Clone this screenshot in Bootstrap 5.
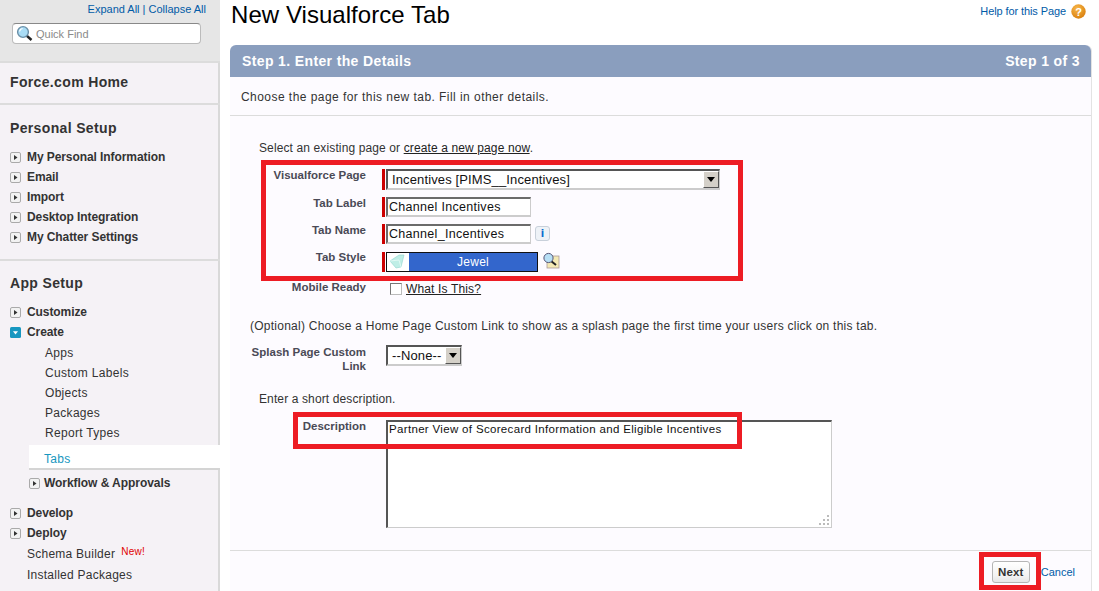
<!DOCTYPE html>
<html lang="en">
<head>
<meta charset="utf-8">
<title>New Visualforce Tab</title>
<link rel="stylesheet" href="https://cdn.jsdelivr.net/npm/bootstrap@5.3.0/dist/css/bootstrap.min.css">
<style>
html,body{height:591px;overflow:hidden;background:#fff;}
body{font-family:"Liberation Sans",Arial,sans-serif;font-size:12px;line-height:14px;color:#222;position:relative;}
a{color:#015ba7;text-decoration:none;}
.sf-page{width:1099px;height:591px;}
.sf-side{width:220px;flex:none;background:#f5f2f6;box-shadow:inset -2px 0 0 #d9d9d9;height:591px;overflow:hidden;}
.sf-search{height:63px;background:#e6e6e6;border-bottom:2px solid #dcdcdc;padding-top:2px;}
.sf-expand{padding-right:14px;text-align:right;font-size:11px;line-height:14px;}
.sf-find{margin:7px 0 0 12px;width:189px;height:21px;background:#fff;border:1px solid #bbb;border-top-color:#888;border-radius:4px;padding-left:3px;color:#8a8a8a;font-size:11px;gap:2px;}
.sf-home{height:42px;border-bottom:2px solid #dcdcdc;padding-left:10px;font-size:14px;font-weight:700;color:#333;letter-spacing:.35px;line-height:39px;}
.sf-sect{height:156px;border-bottom:2px solid #dcdcdc;}
.sf-h{padding-left:10px;font-size:14px;font-weight:700;color:#333;letter-spacing:.35px;line-height:16px;}
.sf-h-a{padding-top:15px;height:42px;}
.sf-h-b{padding-top:14px;height:41px;}
.sf-item{height:20px;padding-left:10px;font-weight:700;color:#333;line-height:20px;gap:6px;letter-spacing:-.08px;}
.sf-item-in{padding-left:29px;gap:4px;letter-spacing:-.05px;}
.sf-item-gap{margin-top:10px;}
.sf-sub{height:20px;padding-left:45px;line-height:20px;color:#333;letter-spacing:.3px;}
.sf-sub-first{margin-top:1px;}
.sf-plain{height:21px;padding-left:27px;line-height:22px;color:#333;letter-spacing:.25px;}
.sf-new{color:#e00000;font-size:10px;line-height:10px;margin-left:6px;vertical-align:3px;}
.sf-cur{height:25px;margin:2px 0 3px 29px;width:191px;background:#fff;border-bottom:2px solid #d4d4d4;padding-left:15px;line-height:29px;color:#1797c0;letter-spacing:.3px;}
.sf-tog{width:11px;height:11px;flex:none;}
.sf-main{width:879px;padding:0 7px 0 10px;flex:none;}
.sf-title{height:45px;}
.sf-title h1{font-size:24px;line-height:30px;margin:0 0 0 1px;font-weight:400;color:#000;letter-spacing:.05px;}
.sf-help{font-size:11px;gap:5px;padding-top:2px;padding-right:6px;height:20px;line-height:16px;letter-spacing:-.1px;}
.sf-panel{background:#fdfbff;border:0;border-right:1px solid #e3e3e3;border-radius:6px 6px 0 0;height:546px;}
.sf-phead{height:32px;background:#8a9ebe;color:#fff;font-weight:700;font-size:14px;letter-spacing:.37px;border:0;border-radius:6px 6px 0 0!important;padding:0 11px 0 12px;line-height:32px;}
.sf-intro{height:39px;line-height:40px;padding-left:11px;border-bottom:1px solid #dcdcdc;letter-spacing:.45px;color:#333;}
.sf-body{padding:25px 0 0 0;height:434px;}
.sf-note{letter-spacing:.12px;color:#333;line-height:14px;padding-left:29px;}
.sf-note-long{letter-spacing:.25px;padding-left:20px;margin-top:23px;}
.sf-note-desc{margin-top:19px;}
.sf-note a{color:#222;text-decoration:underline;}
.sf-label{width:136px;flex:none;text-align:right;font-size:11.5px;font-weight:700;color:#4a4a56;line-height:14px;margin-top:-1px;}
.sf-up{margin-top:-2px;}
.sf-level{margin-top:0;}
.sf-req{width:3px;flex:none;align-self:stretch;background:#c00;margin:0 1px 0 16px;}
.sf-noreq{width:20px;flex:none;}
.sf-noreq-wide{width:24px;}
.sf-input{border-style:solid;border-width:2px 1px 2px 2px;border-color:#6b6b6b #ccc #ccc #6b6b6b;height:20px;width:145px;padding:0 0 0 1px;font:12.5px/14px "Liberation Sans",Arial,sans-serif;letter-spacing:.3px;color:#111;background:#fff;outline:0;border-radius:0;}
.sf-selwrap{border-style:solid;border-width:2px 1px 2px 2px;border-color:#555 #ccc #ccc #555;background:#fff;height:21px;}
.sf-sel-a{width:334px;}
.sf-sel-b{width:76px;}
.sf-sel{appearance:none;border:0;background:transparent;font:13px/15px "Liberation Sans",Arial,sans-serif;letter-spacing:.13px;color:#111;padding:0 0 0 4px;height:17px;flex:1 1 auto;min-width:0;outline:0;}
.sf-arr{width:16px;height:17px;flex:none;background:#d4d0c8;border-style:solid;border-width:1px;border-color:#fff #555 #555 #fff;}
.sf-jewel{width:152px;height:20px;border:1px solid #111;background:#fff;}
.sf-jewel span{flex:1 1 auto;background:#3366cc;color:#fff;text-align:center;line-height:18px;letter-spacing:.3px;font-size:12px;}
.sf-jewel svg{flex:none;margin:0 1px;}
.sf-infob{width:15px;height:15px;border:1px solid #c8d0da;border-radius:3px;background:#eef2f7;color:#0a6cd0;font-weight:700;font-size:10px;line-height:13px;text-align:center;margin:2px 0 0 4px;font-family:"DejaVu Sans",sans-serif;}
.sf-check{width:12px;height:12px;border:1px solid #777;border-right-color:#bbb;border-bottom-color:#bbb;background:#fff;margin:2px 4px 0 0;flex:none;}
.sf-link{color:#222;text-decoration:underline;letter-spacing:.15px;margin-top:1px;}
.sf-area{width:446px;height:108px;border-style:solid;border-width:2px 1px 1px 2px;border-color:#555 #ccc #ccc #555;background:#fff;font:11.5px/14px "Liberation Sans",Arial,sans-serif;letter-spacing:.33px;padding:0 0 0 1px;resize:none;outline:0;color:#111;border-radius:0;display:block;}
.sf-areawrap{position:relative;}
.sf-grip{position:absolute;right:2px;bottom:2px;}
.sf-foot{height:41px;border-top:1px solid #dcdcdc;background:transparent;padding:2px 0 0;}
.sf-next{width:38px;height:22px;padding:0;font-size:11.5px;font-weight:700;color:#333;border:1px solid #b5b5b5;border-radius:3px;background:linear-gradient(#fff,#f2f2f2 70%,#e6e6e6);line-height:18px;letter-spacing:.2px;}
.sf-cancel{font-size:11px;margin:0 16px 0 11px;}
.sf-mt-7{margin-top:7px;}
.sf-mt-8{margin-top:8px;}
.sf-mt-9{margin-top:9px;}
.sf-mt-12{margin-top:12px;}
.sf-mt-14{margin-top:14px;}
.sf-mark{position:absolute;border:5px solid #ed1c24;pointer-events:none;}
.sf-mark-a{left:261px;top:160px;width:482px;height:121px;}
.sf-mark-b{left:293px;top:412px;width:449px;height:37px;}
.sf-mark-c{left:979px;top:552px;width:62px;height:38px;}
</style>
</head>
<body>
<div class="sf-page d-flex">
  <aside class="sf-side">
    <div class="sf-search">
      <div class="sf-expand"><a href="#">Expand All</a> <a href="#">| Collapse All</a></div>
      <div class="sf-find d-flex align-items-center">
        <svg width="18" height="17" viewBox="0 0 18 17"><line x1="10.5" y1="10.5" x2="15.5" y2="15" stroke="#222" stroke-width="2.4"/><circle cx="7" cy="7" r="5.4" fill="#a9dcf5" stroke="#6c90a8" stroke-width="1.4"/><path d="M3.6 6.5a3.5 3.5 0 0 1 3-3" fill="none" stroke="#fff" stroke-width="1.2"/></svg>
        <span>Quick Find</span>
      </div>
    </div>
    <div class="sf-home">Force.com Home</div>
    <div class="sf-sect">
      <div class="sf-h sf-h-a">Personal Setup</div>
      <div class="sf-item d-flex align-items-center"><svg class="sf-tog" viewBox="0 0 11 11"><rect x=".5" y=".5" width="10" height="10" rx="1.5" fill="#f2f2f2" stroke="#aaa"/><path d="M4 3l3.5 2.5L4 8z" fill="#333"/></svg><span>My Personal Information</span></div>
      <div class="sf-item d-flex align-items-center"><svg class="sf-tog" viewBox="0 0 11 11"><rect x=".5" y=".5" width="10" height="10" rx="1.5" fill="#f2f2f2" stroke="#aaa"/><path d="M4 3l3.5 2.5L4 8z" fill="#333"/></svg><span>Email</span></div>
      <div class="sf-item d-flex align-items-center"><svg class="sf-tog" viewBox="0 0 11 11"><rect x=".5" y=".5" width="10" height="10" rx="1.5" fill="#f2f2f2" stroke="#aaa"/><path d="M4 3l3.5 2.5L4 8z" fill="#333"/></svg><span>Import</span></div>
      <div class="sf-item d-flex align-items-center"><svg class="sf-tog" viewBox="0 0 11 11"><rect x=".5" y=".5" width="10" height="10" rx="1.5" fill="#f2f2f2" stroke="#aaa"/><path d="M4 3l3.5 2.5L4 8z" fill="#333"/></svg><span>Desktop Integration</span></div>
      <div class="sf-item d-flex align-items-center"><svg class="sf-tog" viewBox="0 0 11 11"><rect x=".5" y=".5" width="10" height="10" rx="1.5" fill="#f2f2f2" stroke="#aaa"/><path d="M4 3l3.5 2.5L4 8z" fill="#333"/></svg><span>My Chatter Settings</span></div>
    </div>
    <div class="sf-h sf-h-b">App Setup</div>
    <div class="sf-item d-flex align-items-center"><svg class="sf-tog" viewBox="0 0 11 11"><rect x=".5" y=".5" width="10" height="10" rx="1.5" fill="#f2f2f2" stroke="#aaa"/><path d="M4 3l3.5 2.5L4 8z" fill="#333"/></svg><span>Customize</span></div>
    <div class="sf-item d-flex align-items-center"><svg class="sf-tog" viewBox="0 0 11 11"><rect width="11" height="11" rx="1.5" fill="#1797c0"/><path d="M3 4.2h5L5.5 7.5z" fill="#fff"/></svg><span>Create</span></div>
    <div class="sf-sub sf-sub-first">Apps</div>
    <div class="sf-sub">Custom Labels</div>
    <div class="sf-sub">Objects</div>
    <div class="sf-sub">Packages</div>
    <div class="sf-sub">Report Types</div>
    <div class="sf-cur">Tabs</div>
    <div class="sf-item sf-item-in d-flex align-items-center"><svg class="sf-tog" viewBox="0 0 11 11"><rect x=".5" y=".5" width="10" height="10" rx="1.5" fill="#f2f2f2" stroke="#aaa"/><path d="M4 3l3.5 2.5L4 8z" fill="#333"/></svg><span>Workflow &amp; Approvals</span></div>
    <div class="sf-item sf-item-gap d-flex align-items-center"><svg class="sf-tog" viewBox="0 0 11 11"><rect x=".5" y=".5" width="10" height="10" rx="1.5" fill="#f2f2f2" stroke="#aaa"/><path d="M4 3l3.5 2.5L4 8z" fill="#333"/></svg><span>Develop</span></div>
    <div class="sf-item d-flex align-items-center"><svg class="sf-tog" viewBox="0 0 11 11"><rect x=".5" y=".5" width="10" height="10" rx="1.5" fill="#f2f2f2" stroke="#aaa"/><path d="M4 3l3.5 2.5L4 8z" fill="#333"/></svg><span>Deploy</span></div>
    <div class="sf-plain">Schema Builder<span class="sf-new">New!</span></div>
    <div class="sf-plain">Installed Packages</div>
    <div class="sf-plain">AppExchange Updates</div>
  </aside>
  <main class="sf-main">
    <div class="sf-title d-flex justify-content-between align-items-start">
      <h1>New Visualforce Tab</h1>
      <div class="sf-help d-flex align-items-center"><a href="#">Help for this Page</a>
        <svg width="15" height="15" viewBox="0 0 15 15"><defs><radialGradient id="sfq" cx=".4" cy=".3" r=".8"><stop offset="0" stop-color="#f8b74a"/><stop offset="1" stop-color="#d67a08"/></radialGradient></defs><circle cx="7.5" cy="7.5" r="7.2" fill="url(#sfq)"/><text x="7.5" y="11.5" text-anchor="middle" font-family="Liberation Sans" font-weight="700" font-size="11" fill="#fff">?</text></svg>
      </div>
    </div>
    <section class="card sf-panel">
      <div class="card-header sf-phead d-flex justify-content-between"><span>Step 1. Enter the Details</span><span>Step 1 of 3</span></div>
      <div class="sf-intro">Choose the page for this new tab. Fill in other details.</div>
      <div class="card-body sf-body">
        <div class="sf-note">Select an existing page or <a href="#">create a new page now</a>.</div>
        <div class="d-flex sf-mt-14">
          <div class="sf-label">Visualforce Page</div>
          <div class="sf-req"></div>
          <div class="sf-selwrap sf-sel-a d-flex"><select class="sf-sel"><option>Incentives [PIMS__Incentives]</option></select>
            <span class="sf-arr d-flex align-items-center justify-content-center"><svg width="8" height="5" viewBox="0 0 8 5"><path d="M0 0h8L4 5z" fill="#000"/></svg></span></div>
        </div>
        <div class="d-flex sf-mt-7">
          <div class="sf-label">Tab Label</div><div class="sf-req"></div>
          <input class="sf-input" type="text" value="Channel Incentives">
        </div>
        <div class="d-flex align-items-start sf-mt-7">
          <div class="sf-label">Tab Name</div><div class="sf-req"></div>
          <input class="sf-input" type="text" value="Channel_Incentives">
          <span class="sf-infob">i</span>
        </div>
        <div class="d-flex align-items-start sf-mt-8">
          <div class="sf-label sf-up">Tab Style</div><div class="sf-req"></div>
          <div class="sf-jewel d-flex"><svg width="20" height="18" viewBox="0 0 20 18"><path d="M2 8l9-6 5 0-3 12-5 1z" fill="#bfeee6" stroke="#8fd5cf" stroke-width=".6"/><path d="M2 8l9-1 2 7" fill="none" stroke="#e8fbf8" stroke-width=".8"/></svg><span>Jewel</span></div>
          <svg class="ms-1" width="18" height="17" viewBox="0 0 18 17"><rect x="5" y="4" width="12" height="12" fill="#f4e9b4" stroke="#a99" stroke-width=".8"/><line x1="9" y1="9" x2="14" y2="13" stroke="#222" stroke-width="2"/><circle cx="6.5" cy="6" r="4.6" fill="#b7dff5" stroke="#557" stroke-width="1"/></svg>
        </div>
        <div class="d-flex align-items-start sf-mt-9">
          <div class="sf-label">Mobile Ready</div><div class="sf-noreq-wide"></div>
          <span class="sf-check"></span><a class="sf-link" href="#">What Is This?</a>
        </div>
        <div class="sf-note sf-note-long">(Optional) Choose a Home Page Custom Link to show as a splash page the first time your users click on this tab.</div>
        <div class="d-flex align-items-start sf-mt-12">
          <div class="sf-label sf-level">Splash Page Custom Link</div><div class="sf-noreq"></div>
          <div class="sf-selwrap sf-sel-b d-flex"><select class="sf-sel"><option>--None--</option></select>
            <span class="sf-arr d-flex align-items-center justify-content-center"><svg width="8" height="5" viewBox="0 0 8 5"><path d="M0 0h8L4 5z" fill="#000"/></svg></span></div>
        </div>
        <div class="sf-note sf-note-desc">Enter a short description.</div>
        <div class="d-flex align-items-start sf-mt-14">
          <div class="sf-label">Description</div><div class="sf-noreq"></div>
          <div class="sf-areawrap"><textarea class="sf-area">Partner View of Scorecard Information and Eligible Incentives</textarea>
            <svg class="sf-grip" width="11" height="11" viewBox="0 0 11 11" fill="#bbb"><rect x="8" y="0" width="2" height="2"/><rect x="4" y="4" width="2" height="2"/><rect x="8" y="4" width="2" height="2"/><rect x="0" y="8" width="2" height="2"/><rect x="4" y="8" width="2" height="2"/><rect x="8" y="8" width="2" height="2"/></svg></div>
        </div>
      </div>
      <div class="card-footer sf-foot d-flex justify-content-end align-items-center">
        <button type="button" class="btn sf-next">Next</button><a class="sf-cancel" href="#">Cancel</a>
      </div>
    </section>
  </main>
</div>
<div class="sf-mark sf-mark-a"></div>
<div class="sf-mark sf-mark-b"></div>
<div class="sf-mark sf-mark-c"></div>
</body>
</html>
